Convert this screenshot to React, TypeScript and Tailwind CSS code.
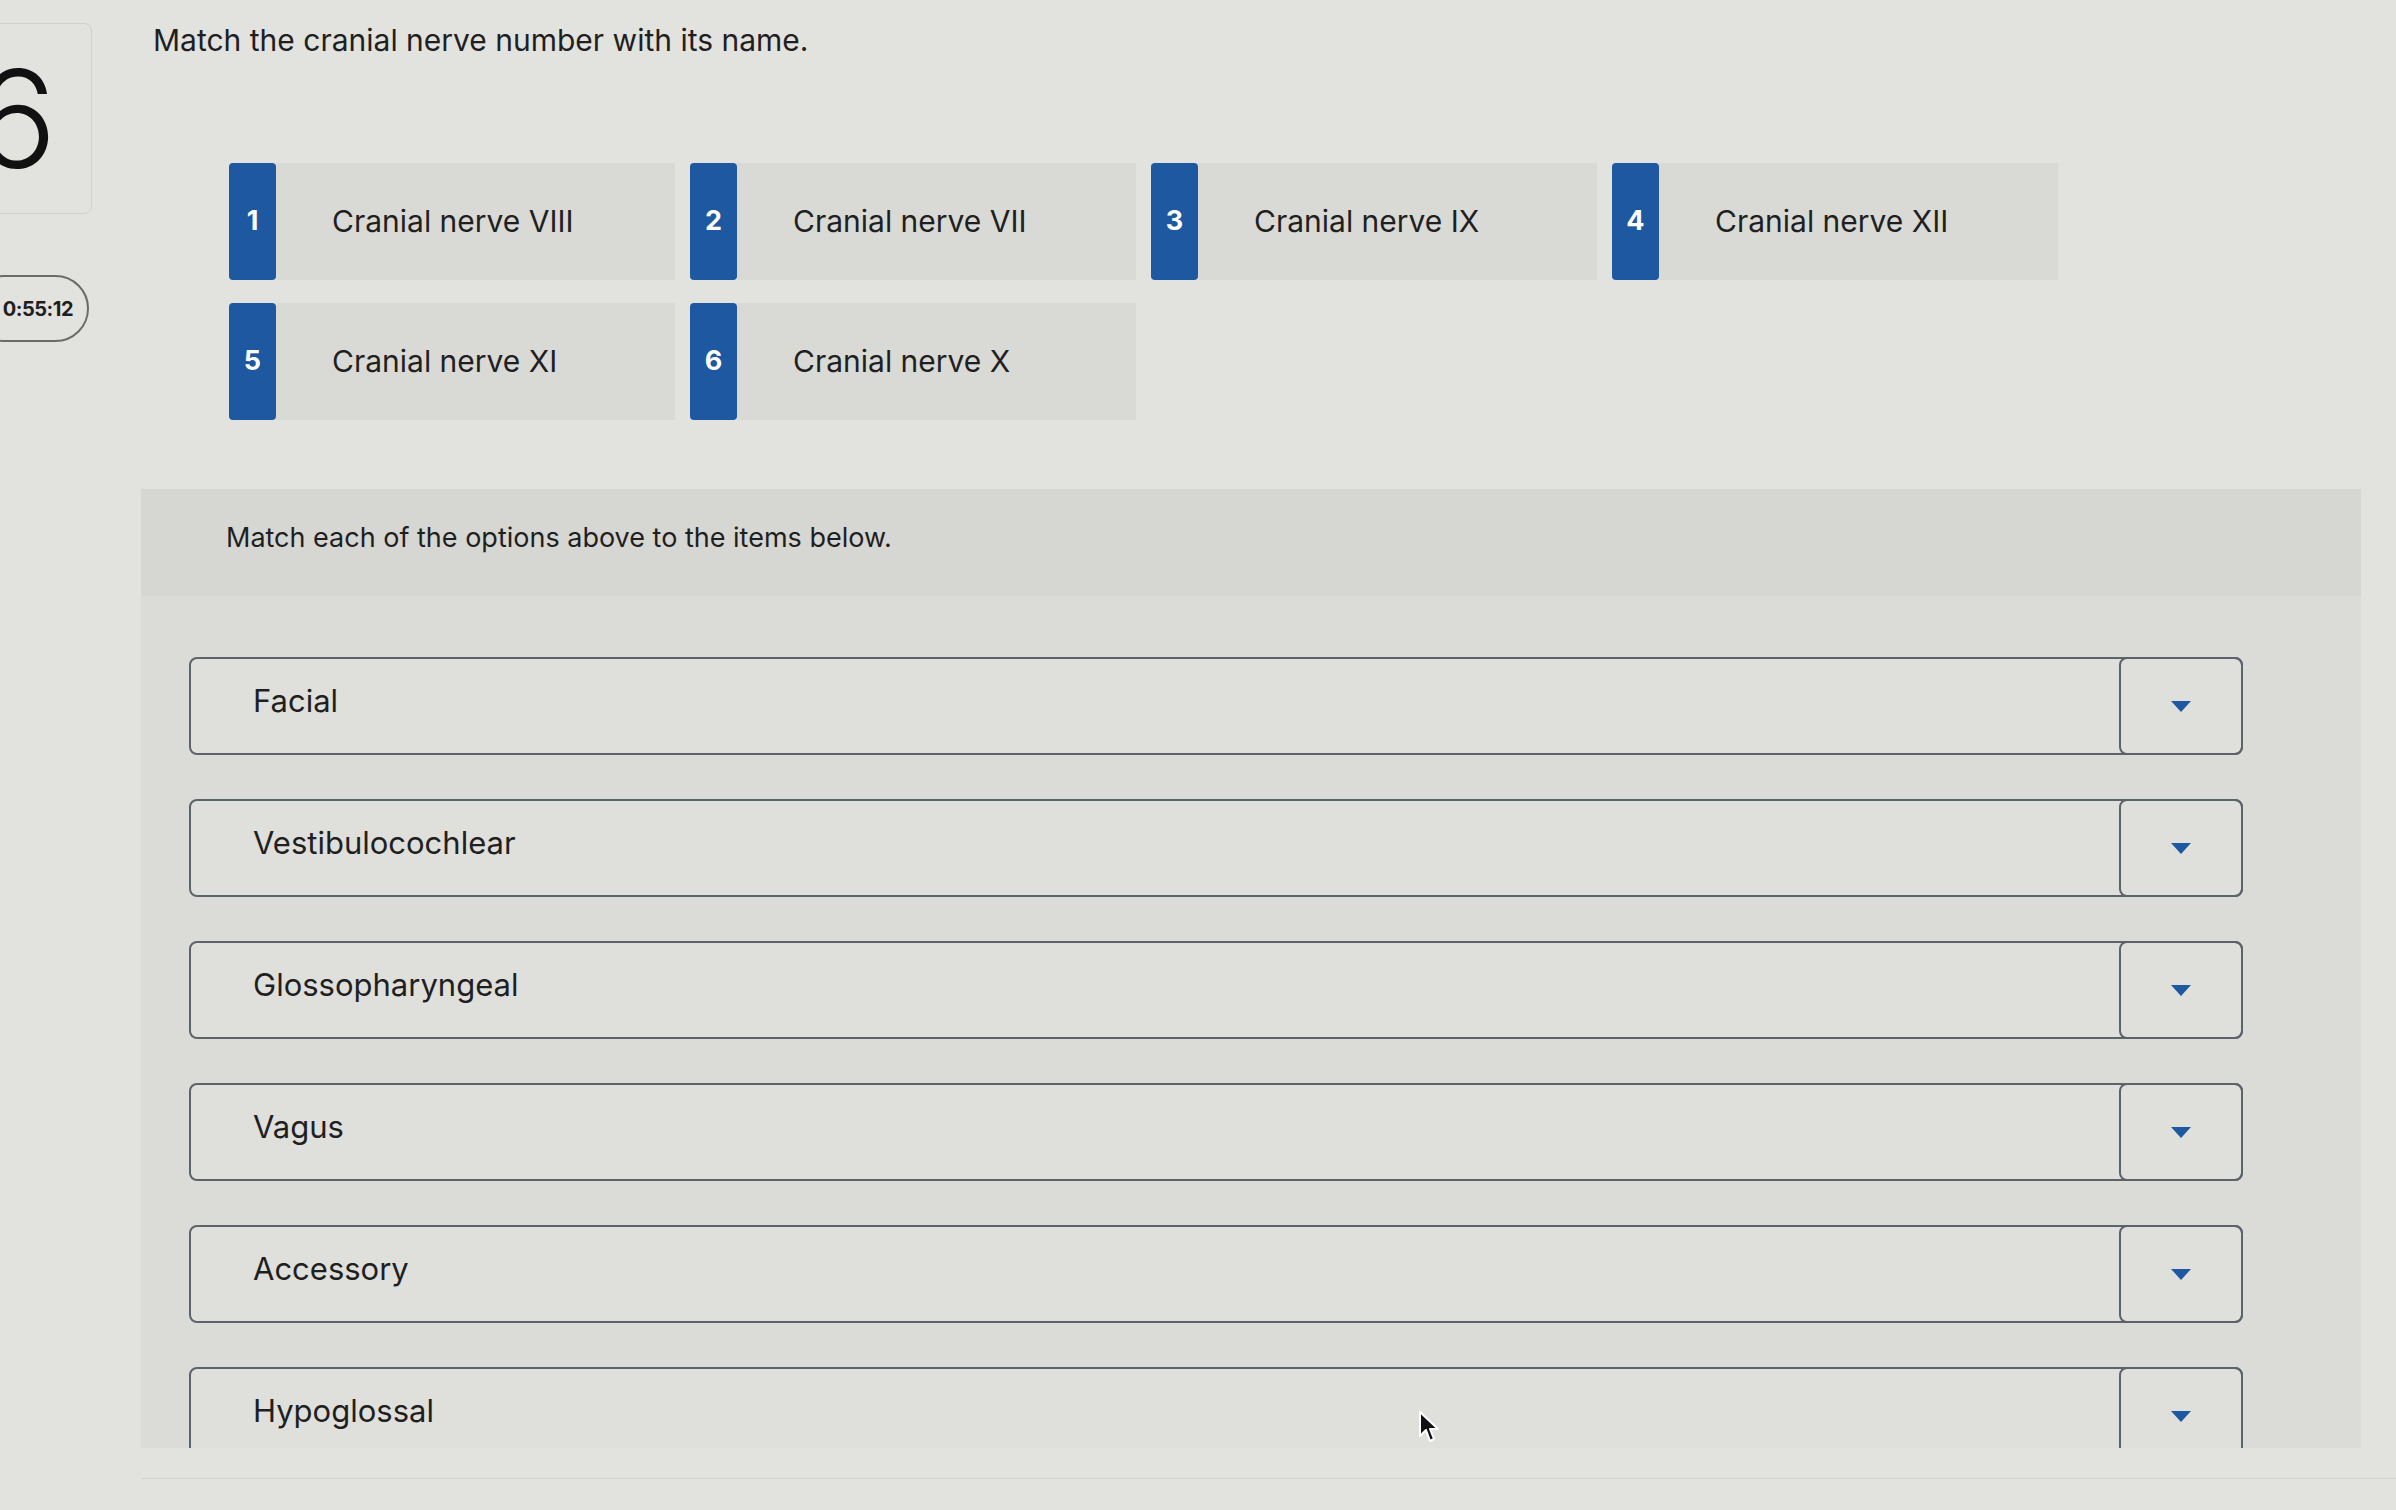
import React from 'react';

const TILES = [
  { n: 1, label: 'Cranial nerve VIII' },
  { n: 2, label: 'Cranial nerve VII' },
  { n: 3, label: 'Cranial nerve IX' },
  { n: 4, label: 'Cranial nerve XII' },
  { n: 5, label: 'Cranial nerve XI' },
  { n: 6, label: 'Cranial nerve X' },
];

const ITEMS = ['Facial', 'Vestibulocochlear', 'Glossopharyngeal', 'Vagus', 'Accessory', 'Hypoglossal'];

function Tile({ n, label }: { n: number; label: string }) {
  return (
    <div className="flex h-[117px]">
      <div className="w-[47px] shrink-0 rounded-[4px] bg-[#1e58a0] flex items-center justify-center text-[27px] font-bold text-white">
        {n}
      </div>
      <div className="flex-1 bg-[#d9d9d6] flex items-center pl-[56px] text-[30px] text-[#1f1f1f]">{label}</div>
    </div>
  );
}

function MatchRow({ label }: { label: string }) {
  return (
    <div className="flex h-[98px] shrink-0 rounded-[8px] border-2 border-[#5d636b] bg-[#dfdfdc]">
      <div className="flex-1 flex items-center pl-[62px] pb-[10px] text-[31px] text-[#1f1f1f]">{label}</div>
      <div className="w-[124px] -my-[2px] -mr-[2px] rounded-[8px] border-2 border-[#5d636b] flex items-center justify-center">
        <svg width="20" height="11" viewBox="0 0 20 11">
          <path d="M0 0 H20 L10 11 Z" fill="#1e58a0" />
        </svg>
      </div>
    </div>
  );
}

export default function App() {
  return (
    <div className="relative w-[2396px] h-[1510px] overflow-hidden bg-[#e2e2df] flex font-['Inter',sans-serif] text-[#1f1f1f]">
      <aside className="w-[141px] shrink-0 flex flex-col">
        <div className="mt-[23px] -ml-[60px] w-[152px] h-[191px] rounded-lg border border-[#cfcfcc] flex items-center justify-center text-[136px] font-light leading-none text-[#111]">
          6
        </div>
        <div className="mt-[61px] -ml-[30px] w-[119px] h-[67px] rounded-full border-2 border-[#6b6b6b] flex items-center justify-end pr-[14px] text-[20px] font-bold tracking-tight">
          0:55:12
        </div>
      </aside>

      <main className="flex-1 flex flex-col">
        <h1 className="ml-[12px] mt-[21px] text-[30px] leading-[38px]">Match the cranial nerve number with its name.</h1>

        <div className="ml-[88px] mt-[104px] grid grid-cols-[repeat(4,446px)] gap-x-[15px] gap-y-[23px]">
          {TILES.map((t) => (
            <Tile key={t.n} n={t.n} label={t.label} />
          ))}
        </div>

        <section className="mt-[69px] w-[2220px] h-[959px] shrink-0 overflow-hidden bg-[#dbdbd8]">
          <div className="h-[107px] bg-[#d6d6d3] flex items-center pl-[85px] pb-[8px] text-[27px]">
            Match each of the options above to the items below.
          </div>
          <div className="pl-[48px] pr-[118px] pt-[61px] flex flex-col gap-[44px]">
            {ITEMS.map((item) => (
              <MatchRow key={item} label={item} />
            ))}
          </div>
        </section>
        <div className="mt-[30px] h-px w-full bg-[#d2d2cf]" />
      </main>

      <svg className="absolute left-[1418px] top-[1410px]" width="22" height="34" viewBox="0 0 22 34">
        <path d="M2 2 L2 26 L8 20 L12 31 L16 29 L12 19 L20 19 Z" fill="#111" stroke="#fff" strokeWidth="2" strokeLinejoin="round" />
      </svg>
    </div>
  );
}
